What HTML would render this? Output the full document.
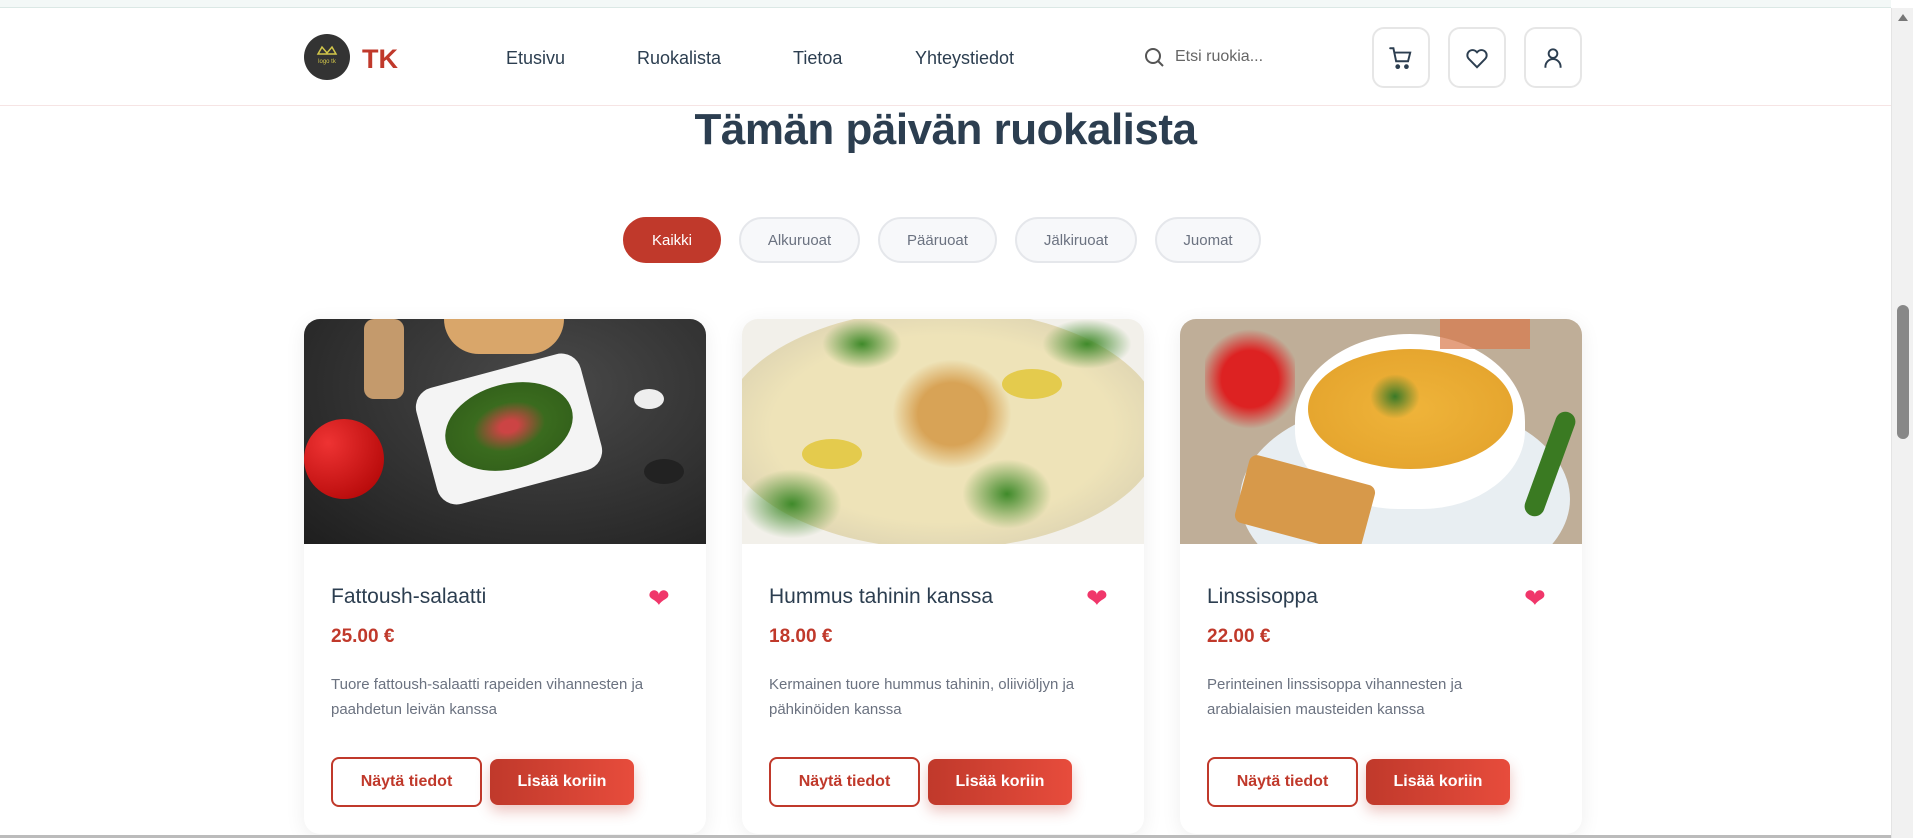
<!DOCTYPE html>
<html><head><meta charset="utf-8"><style>
*{box-sizing:border-box;margin:0;padding:0}
body{width:1913px;height:838px;overflow:hidden;background:#fff;font-family:"Liberation Sans",sans-serif;position:relative}
.topline{position:absolute;left:0;top:0;width:1891px;height:8px;background:#f3f8f7;border-bottom:1px solid #dbe8e5}
header{position:absolute;left:0;top:8px;width:1891px;height:98px;background:#fff;border-bottom:1px solid #f6e4e4}
.logo{position:absolute;left:304px;top:26px;width:46px;height:46px;border-radius:50%;background:#333;}
.tk{position:absolute;left:362px;top:36px;font-size:27px;font-weight:bold;color:#c0392b}
.nav{position:absolute;top:40px;font-size:18px;color:#2c3e50}
.search{position:absolute;left:1143px;top:38px}
.stext{position:absolute;left:1175px;top:40px;font-size:16px;color:#666}
.ib{position:absolute;top:19px;width:58px;height:61px;border:2px solid #e6e6e6;border-radius:12px;display:flex;align-items:center;justify-content:center}
.scroll{position:absolute;left:1891px;top:8px;width:22px;height:830px;background:#f1f1f1;border-left:1px solid #e4e4e4}
.thumb{position:absolute;left:5px;top:297px;width:12px;height:134px;background:#888;border-radius:6px}
h1{position:absolute;left:0;width:1891px;top:105px;text-align:center;font-size:44px;color:#2c3e50;font-weight:bold;letter-spacing:-0.5px}
.f{position:absolute;top:217px;height:46px;border-radius:23px;border:2px solid #e5e7eb;background:#f7f8fa;color:#6b7280;font-size:15px;display:flex;align-items:center;justify-content:center}
.card{position:absolute;top:319px;width:402px;height:515px;background:#fff;border-radius:16px;box-shadow:0 4px 20px rgba(0,0,0,.07);overflow:hidden}
.img{height:225px;position:relative;overflow:hidden}
.t{position:absolute;left:27px;top:266px;font-size:21px;color:#2c3e50}
.heart{position:absolute;left:344px;top:266px;font-size:26px;color:#f0366a;line-height:1}
.p{position:absolute;left:27px;top:307px;font-size:19px;font-weight:bold;color:#c0392b}
.d{position:absolute;left:27px;top:353px;width:330px;font-size:15px;line-height:25px;color:#6b7280}
.b1{position:absolute;left:27px;top:438px;width:151px;height:50px;border:2px solid #c0392b;border-radius:8px;color:#c0392b;font-weight:bold;font-size:16px;display:flex;align-items:center;justify-content:center}
.b2{position:absolute;left:186px;top:440px;width:144px;height:46px;border-radius:8px;background:linear-gradient(90deg,#c0392b,#e74c3c);color:#fff;font-weight:bold;font-size:16px;display:flex;align-items:center;justify-content:center;box-shadow:0 6px 14px rgba(192,57,43,.3)}
.bottom{position:absolute;left:0;top:835px;width:1891px;height:3px;background:#bbb}
</style></head><body>
<div class="topline"></div>
<header>
<div class="logo"><svg width="46" height="46"><path d="M14 20 L18 13 L23 19 L28 13 L32 20 Z" fill="none" stroke="#d4c84a" stroke-width="1.5"/><text x="23" y="29" font-size="6" fill="#d4c84a" text-anchor="middle" font-family="Liberation Sans">logo tk</text></svg></div>
<div class="tk">TK</div>
<div class="nav" style="left:506px">Etusivu</div>
<div class="nav" style="left:637px">Ruokalista</div>
<div class="nav" style="left:793px">Tietoa</div>
<div class="nav" style="left:915px">Yhteystiedot</div>
<svg class="search" width="24" height="24" viewBox="0 0 24 24" fill="none" stroke="#555" stroke-width="2"><circle cx="10" cy="10" r="7"/><path d="M15 15l5 5"/></svg>
<div class="stext">Etsi ruokia...</div>
<div class="ib" style="left:1372px"><svg width="26" height="26" viewBox="0 0 24 24" fill="none" stroke="#2c3e50" stroke-width="1.8" stroke-linecap="round"><path d="M2 3h3l2.5 12h11l2-8H6"/><circle cx="9" cy="20" r="1.3" fill="#2c3e50"/><circle cx="17" cy="20" r="1.3" fill="#2c3e50"/></svg></div>
<div class="ib" style="left:1448px"><svg width="26" height="26" viewBox="0 0 24 24" fill="none" stroke="#2c3e50" stroke-width="1.8"><path d="M12 20.5l-7.5-7.6a4.8 4.8 0 0 1 6.8-6.8l.7.7.7-.7a4.8 4.8 0 0 1 6.8 6.8z"/></svg></div>
<div class="ib" style="left:1524px"><svg width="26" height="26" viewBox="0 0 24 24" fill="none" stroke="#2c3e50" stroke-width="1.8"><circle cx="12" cy="8" r="4"/><path d="M5 21v-1a7 7 0 0 1 14 0v1"/></svg></div>
</header>
<h1>Tämän päivän ruokalista</h1>
<div class="f" style="left:623px;width:98px;background:#c0392b;border-color:#c0392b;color:#fff">Kaikki</div>
<div class="f" style="left:739px;width:121px">Alkuruoat</div>
<div class="f" style="left:878px;width:119px">Pääruoat</div>
<div class="f" style="left:1015px;width:122px">Jälkiruoat</div>
<div class="f" style="left:1155px;width:106px">Juomat</div>

<div class="card" style="left:304px">
<div class="img" style="background:radial-gradient(ellipse at 60% 30%,#4a4a4a,#1e1e1e)">
<div style="position:absolute;left:120px;top:50px;width:170px;height:120px;background:#f4f4f4;transform:rotate(-15deg);border-radius:20px"></div>
<div style="position:absolute;left:140px;top:65px;width:130px;height:85px;background:radial-gradient(#c44 10%,#3a6b1e 40%,#2e5a18);border-radius:50%;transform:rotate(-15deg)"></div>
<div style="position:absolute;left:60px;top:0;width:40px;height:80px;background:#c49a6c;border-radius:10px"></div>
<div style="position:absolute;left:140px;top:0;width:120px;height:35px;background:#d9a66a;border-radius:0 0 40px 40px"></div>
<div style="position:absolute;left:0;top:100px;width:80px;height:80px;background:radial-gradient(circle at 30% 30%,#e33,#a00);border-radius:50%"></div>
<div style="position:absolute;left:330px;top:70px;width:30px;height:20px;background:#eee;border-radius:50%"></div>
<div style="position:absolute;left:340px;top:140px;width:40px;height:25px;background:#222;border-radius:50%"></div>
</div>
<div class="t">Fattoush-salaatti</div><div class="heart">❤</div>
<div class="p">25.00 €</div>
<div class="d">Tuore fattoush-salaatti rapeiden vihannesten ja paahdetun leivän kanssa</div>
<div class="b1">Näytä tiedot</div><div class="b2">Lisää koriin</div>
</div>

<div class="card" style="left:742px">
<div class="img" style="background:#f2f0ea">
<div style="position:absolute;left:-20px;top:-10px;width:440px;height:240px;background:radial-gradient(ellipse,#eee3b8 55%,#e2d8b4 70%,#d8d2c4);border-radius:50%"></div>
<div style="position:absolute;left:150px;top:40px;width:120px;height:110px;background:radial-gradient(#d8a356 40%,rgba(216,163,86,0) 70%)"></div>
<div style="position:absolute;left:60px;top:120px;width:60px;height:30px;background:#e0c020;border-radius:50%;opacity:.7"></div>
<div style="position:absolute;left:260px;top:50px;width:60px;height:30px;background:#e0c020;border-radius:50%;opacity:.7"></div>
<div style="position:absolute;left:80px;top:0;width:80px;height:50px;background:radial-gradient(#3f8a2a,rgba(63,138,42,0) 70%)"></div>
<div style="position:absolute;left:300px;top:0;width:90px;height:50px;background:radial-gradient(#3f8a2a,rgba(63,138,42,0) 70%)"></div>
<div style="position:absolute;left:0;top:150px;width:100px;height:70px;background:radial-gradient(#3f8a2a,rgba(63,138,42,0) 70%)"></div>
<div style="position:absolute;left:220px;top:140px;width:90px;height:70px;background:radial-gradient(#3f8a2a,rgba(63,138,42,0) 70%)"></div>
</div>
<div class="t">Hummus tahinin kanssa</div><div class="heart">❤</div>
<div class="p">18.00 €</div>
<div class="d">Kermainen tuore hummus tahinin, oliiviöljyn ja pähkinöiden kanssa</div>
<div class="b1">Näytä tiedot</div><div class="b2">Lisää koriin</div>
</div>

<div class="card" style="left:1180px">
<div class="img" style="background:#bfae98">
<div style="position:absolute;left:60px;top:80px;width:330px;height:200px;background:#e8eef2;border-radius:50%"></div>
<div style="position:absolute;left:115px;top:15px;width:230px;height:175px;background:#fff;border-radius:50% 50% 45% 45%"></div>
<div style="position:absolute;left:128px;top:30px;width:205px;height:120px;background:radial-gradient(#efb43a,#e2a02a);border-radius:50%"></div>
<div style="position:absolute;left:190px;top:55px;width:50px;height:45px;background:radial-gradient(#3a7a28,rgba(58,122,40,0) 70%)"></div>
<div style="position:absolute;left:25px;top:5px;width:90px;height:110px;background:radial-gradient(circle at 50% 50%,#d22 40%,rgba(210,30,30,0) 70%)"></div>
<div style="position:absolute;left:60px;top:150px;width:130px;height:70px;background:#d7994a;transform:rotate(15deg);border-radius:8px"></div>
<div style="position:absolute;left:360px;top:90px;width:20px;height:110px;background:#3a7a22;border-radius:10px;transform:rotate(20deg)"></div>
<div style="position:absolute;left:260px;top:0;width:90px;height:30px;background:#d9774a;opacity:.7"></div>
</div>
<div class="t">Linssisoppa</div><div class="heart">❤</div>
<div class="p">22.00 €</div>
<div class="d">Perinteinen linssisoppa vihannesten ja arabialaisien mausteiden kanssa</div>
<div class="b1">Näytä tiedot</div><div class="b2">Lisää koriin</div>
</div>

<div class="scroll"><div style="position:absolute;left:6px;top:6px;width:0;height:0;border-left:5px solid transparent;border-right:5px solid transparent;border-bottom:7px solid #777"></div><div class="thumb"></div></div>
<div class="bottom"></div>
</body></html>
